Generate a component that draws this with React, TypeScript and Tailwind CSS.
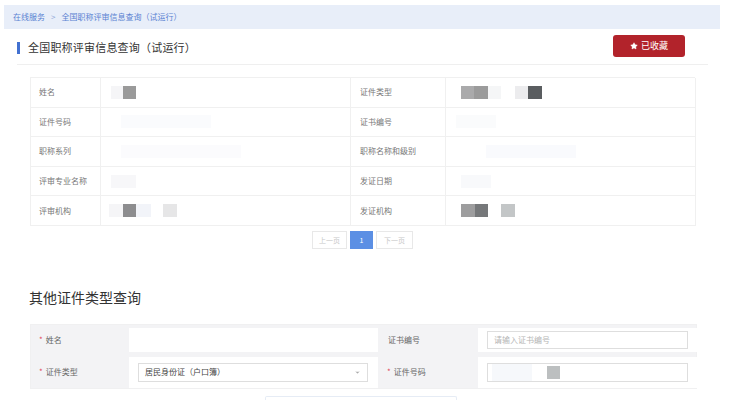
import { Star, ChevronDown } from "lucide-react";

const rows = [
  ["姓名", "证件类型"],
  ["证件号码", "证书编号"],
  ["职称系列", "职称名称和级别"],
  ["评审专业名称", "发证日期"],
  ["评审机构", "发证机构"],
];

// blurred / masked value blocks, [offset x within cell, width, colour]
const masks: Record<string, [number, number, string][]> = {
  "0-0": [
    [10, 12, "#f5f5f7"],
    [22, 13, "#9a9a9a"],
  ],
  "0-1": [
    [15, 13, "#aaaaab"],
    [28, 14, "#9b9b9b"],
    [42, 13, "#f5f6f7"],
    [69, 13, "#ececee"],
    [82, 14, "#5a5d60"],
  ],
  "1-0": [[20, 90, "#fafbfd"]],
  "1-1": [[10, 40, "#fafbfc"]],
  "2-0": [[20, 120, "#fbfbfd"]],
  "2-1": [[40, 90, "#f9fafd"]],
  "3-0": [[10, 25, "#f7f7f9"]],
  "3-1": [[15, 30, "#f8f9fb"]],
  "4-0": [
    [8, 14, "#f5f5f7"],
    [22, 13, "#8d8d8f"],
    [35, 15, "#f2f4f9"],
    [62, 14, "#e6e6e7"],
  ],
  "4-1": [
    [15, 14, "#9d9d9e"],
    [29, 13, "#76787a"],
    [55, 14, "#c3c6c7"],
  ],
};

function Masked({ id }: { id: string }) {
  const list = masks[id] || [];
  return (
    <div className="flex items-center h-full">
      {list.map(([x, w, c], i) => (
        <div
          key={i}
          className="h-[13px] shrink-0 blur-[0.4px]"
          style={{ marginLeft: i === 0 ? x : x - (list[i - 1][0] + list[i - 1][1]), width: w, background: c }}
        />
      ))}
    </div>
  );
}

export default function App() {
  return (
    <div
      className="w-[732px] h-[400px] overflow-hidden bg-white text-[#333]"
      style={{ fontFamily: '"Noto Sans CJK SC", "Noto Sans", sans-serif' }}
    >
      {/* breadcrumb */}
      <div className="ml-[4px] mt-[5px] w-[716px] h-[24px] bg-[#e8eef9] flex items-center pl-[9px] text-[8px] text-[#5a82d2] gap-[6px]">
        <span>在线服务</span>
        <span className="text-[#8ea6d8]">&gt;</span>
        <span>全国职称评审信息查询（试运行）</span>
      </div>

      {/* title */}
      <div className="ml-[17px] w-[691px] h-[36px] flex items-center justify-between border-b border-[#efefef] pr-[23px]">
        <div className="flex items-center">
          <div className="w-[3px] h-[12px] bg-[#4271d1] mt-[2px]" />
          <span className="ml-[8px] text-[11px] tracking-[0.2px] text-[#333] mt-[2px]">全国职称评审信息查询（试运行）</span>
        </div>
        <button className="w-[72px] h-[22px] rounded-[3px] bg-[#b2232b] text-white text-[9px] flex items-center justify-center gap-[3px] -mt-[1px]">
          <Star className="w-[8px] h-[8px]" fill="white" strokeWidth={1} />
          <span>已收藏</span>
        </button>
      </div>

      {/* result table */}
      <div className="ml-[30px] mt-[12px] w-[665px] border-t border-l border-[#f0f0f0]">
        {rows.map((r, i) => (
          <div key={i} className="grid grid-cols-[70px_250px_95px_250px] h-[29.6px]">
            <div className="border-r border-b border-[#f0f0f0] pl-[8px] flex items-center text-[8px] text-[#777]">{r[0]}</div>
            <div className="border-r border-b border-[#f0f0f0]">
              <Masked id={`${i}-0`} />
            </div>
            <div className="border-r border-b border-[#f0f0f0] pl-[9px] flex items-center text-[8px] text-[#777]">{r[1]}</div>
            <div className="border-r border-b border-[#f0f0f0]">
              <Masked id={`${i}-1`} />
            </div>
          </div>
        ))}
      </div>

      {/* pagination */}
      <div className="ml-[30px] w-[665px] mt-[5px] flex justify-center items-center gap-[3px] text-[7px]">
        <div className="w-[35px] h-[18px] border border-[#e8e8e8] text-[#c8c8c8] flex items-center justify-center">上一页</div>
        <div className="w-[23px] h-[18px] bg-[#5b8fe4] text-white flex items-center justify-center">1</div>
        <div className="w-[37px] h-[18px] border border-[#e8e8e8] text-[#c8c8c8] flex items-center justify-center">下一页</div>
      </div>

      {/* other query */}
      <div className="ml-[29px] mt-[38px] text-[14px] leading-[20px] text-[#333]">其他证件类型查询</div>

      <div className="ml-[30px] mt-[17px] w-[667px] bg-[#f3f3f5] border border-[#f0f0f1] pt-[3px] text-[8px] text-[#666]">
        <div className="grid grid-cols-[98px_249px_100px_220px] h-[24px]">
          <div className="flex items-center pl-[8px]">
            <span className="text-[#e04a5a] mr-[3px]">*</span>姓名
          </div>
          <div className="bg-white" />
          <div className="flex items-center pl-[10px]">证书编号</div>
          <div className="bg-white flex items-center pl-[9px] pr-[10px]">
            <div className="w-full h-[18px] border border-[#dedede] flex items-center pl-[6px] text-[#b5b5b5]">请输入证书编号</div>
          </div>
        </div>
        <div className="grid grid-cols-[98px_249px_100px_220px] h-[31px] mt-[5px]">
          <div className="flex items-center pl-[8px]">
            <span className="text-[#e04a5a] mr-[3px]">*</span>证件类型
          </div>
          <div className="bg-white flex items-center pl-[9px] pr-[10px]">
            <div className="w-full h-[19px] border border-[#dedede] flex items-center justify-between pl-[6px] pr-[6px] text-[#444]">
              <span>居民身份证（户口簿）</span>
              <ChevronDown className="w-[7px] h-[7px] text-[#aaa]" fill="#aaa" strokeWidth={1} />
            </div>
          </div>
          <div className="flex items-center pl-[9px]">
            <span className="text-[#e04a5a] mr-[3px]">*</span>证件号码
          </div>
          <div className="bg-white flex items-center pl-[9px] pr-[10px]">
            <div className="w-full h-[19px] border border-[#dedede] flex items-center">
              <div className="w-[40px] h-full bg-[#f6f8fb] ml-[4px]" />
              <div className="w-[13px] h-[13px] bg-[#bcbfc0] ml-[15px]" />
            </div>
          </div>
        </div>
      </div>

      <div className="ml-[265px] mt-[7px] w-[192px] h-[10px] border-t border-x border-[#e6ecf5] rounded-t-[2px]" />
    </div>
  );
}
